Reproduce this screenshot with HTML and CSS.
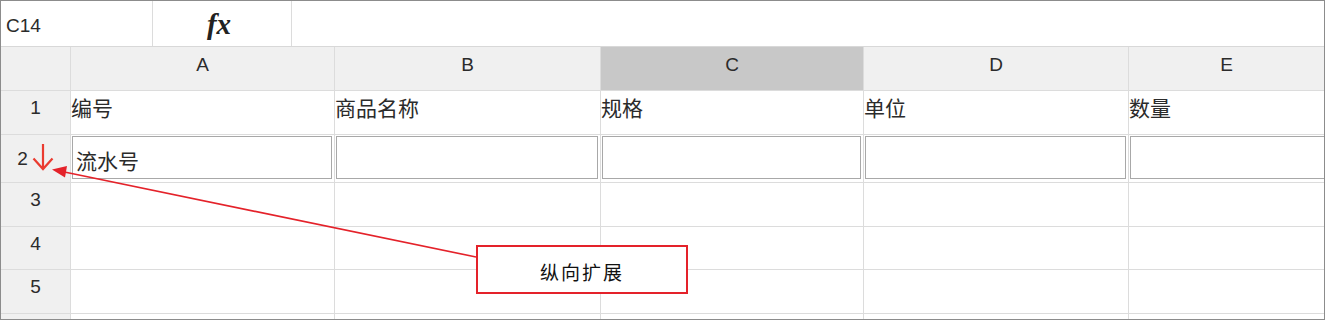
FILE: index.html
```html
<html>
	<head>
		<link rel="stylesheet" href="styles.css">
	</head>
	<body>
		<div class="frame">
			<div class="formulaBar">
				<div class="nameBox">C14</div>
				<div class="fxBox">fx</div>
				<div class="formulaInput"></div>
			</div>
			<div class="sheet">
				<div class="corner"></div>
				<div class="colHead">A</div>
				<div class="colHead">B</div>
				<div class="colHead colSelected">C</div>
				<div class="colHead">D</div>
				<div class="colHead lastCol">E</div>

				<div class="rowHead">1</div>
				<div class="cell">编号</div>
				<div class="cell">商品名称</div>
				<div class="cell">规格</div>
				<div class="cell">单位</div>
				<div class="cell lastCol">数量</div>

				<div class="rowHead rowExpand">2<svg class="expandIcon" width="22" height="28" viewBox="0 0 22 28"><path d="M11 1 L11 26 M1.5 15.5 L11 26 L20.5 15.5" fill="none" stroke="#ea3b30" stroke-width="2.2"/></svg></div>
				<div class="cell inputCell"><div class="fieldBox">流水号</div></div>
				<div class="cell inputCell"><div class="fieldBox"></div></div>
				<div class="cell inputCell"><div class="fieldBox"></div></div>
				<div class="cell inputCell"><div class="fieldBox"></div></div>
				<div class="cell inputCell lastCol"><div class="fieldBox openRight"></div></div>

				<div class="rowHead">3</div>
				<div class="cell"></div><div class="cell"></div><div class="cell"></div><div class="cell"></div><div class="cell lastCol"></div>

				<div class="rowHead">4</div>
				<div class="cell"></div><div class="cell"></div><div class="cell"></div><div class="cell"></div><div class="cell lastCol"></div>

				<div class="rowHead">5</div>
				<div class="cell"></div><div class="cell"></div><div class="cell"></div><div class="cell"></div><div class="cell lastCol"></div>

				<div class="rowHead rowTail"></div>
				<div class="cell rowTail"></div><div class="cell rowTail"></div><div class="cell rowTail"></div><div class="cell rowTail"></div><div class="cell rowTail lastCol"></div>
			</div>

			<!-- annotation callout -->
			<svg class="callLine" width="1325" height="320" viewBox="0 0 1325 320">
				<line x1="476" y1="257" x2="62" y2="171.5" stroke="#e4222a" stroke-width="1.6"/>
				<path d="M52 169.5 L67 166 L65 177.5 Z" fill="#e4222a"/>
			</svg>
			<div class="callout">纵向扩展</div>
		</div>
	</body>
</html>
```

FILE: styles.css
```css
body{ margin: 0; background: #ffffff; }
.frame{ position: relative; width: 1325px; height: 320px; box-sizing: border-box; border: 1px solid #8c8c8c; overflow: hidden; font-family: "Liberation Sans", "Noto Sans CJK SC", sans-serif; color: #2b2b2b; background: #ffffff; }

.formulaBar{ display: flex; height: 46px; box-sizing: border-box; border-bottom: 1px solid #d8d8d8; }
.nameBox{ width: 152px; box-sizing: border-box; border-right: 1px solid #dcdcdc; padding: 5px 0 0 5px; font-size: 19px; line-height: 40px; }
.fxBox{ width: 139px; box-sizing: border-box; border-right: 1px solid #dcdcdc; padding-right: 6px; text-align: center; font-family: "Liberation Serif", serif; font-style: italic; font-weight: bold; font-size: 29px; line-height: 46px; color: #222222; }
.formulaInput{ flex: 1; }

.sheet{ display: grid; grid-template-columns: 70px 264px 266px 263px 265px 1fr; grid-template-rows: 44px 44px 48px 44px 43px 44px 1fr; height: 272px; }
.sheet > div{ box-sizing: border-box; border-right: 1px solid #dcdcdc; border-bottom: 1px solid #dcdcdc; }
.sheet > .lastCol{ border-right: none; }

.corner{ background: #f0f0f0; }
.colHead{ background: #f0f0f0; display: flex; align-items: center; justify-content: center; padding-bottom: 7px; font-size: 19px; }
.colSelected{ background: #c8c8c8; }
.rowHead{ background: #f0f0f0; display: flex; align-items: center; justify-content: center; padding-bottom: 9px; font-size: 19px; }
.rowExpand{ padding: 0 0 0 0; gap: 4px; }
.expandIcon{ display: block; margin-top: -3px; }

.cell{ font-family: "Noto Sans CJK SC", "Liberation Sans", sans-serif; font-size: 21px; line-height: 24px; padding: 4px 0 0 0; }
.inputCell{ padding: 1px 2px 3px 1px; }
.fieldBox{ height: 100%; box-sizing: border-box; border: 1px solid #a8a8a8; padding: 4px 0 0 3px; display: flex; align-items: center; }
.openRight{ margin-right: -6px; }

.callLine{ position: absolute; left: -1px; top: -1px; pointer-events: none; }
.callout{ position: absolute; left: 475px; top: 244px; width: 212px; height: 49px; box-sizing: border-box; border: 2px solid #e4222a; background: #ffffff; display: flex; align-items: center; justify-content: center; padding-top: 3px; font-family: "Noto Sans CJK SC", sans-serif; font-size: 19px; letter-spacing: 2px; color: #111111; }
```
